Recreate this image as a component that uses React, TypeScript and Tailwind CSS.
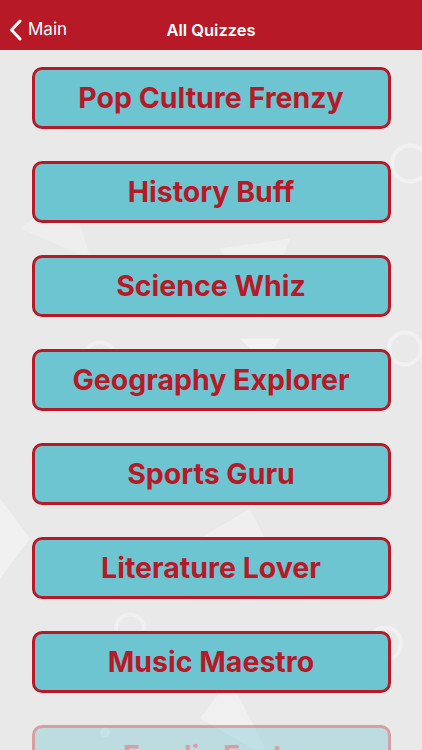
const quizzes = [
  "Pop Culture Frenzy",
  "History Buff",
  "Science Whiz",
  "Geography Explorer",
  "Sports Guru",
  "Literature Lover",
  "Music Maestro",
  "Foodie Facts",
];

function Backdrop() {
  return (
    <svg className="absolute inset-0 h-full w-full" viewBox="0 0 422 700" fill="none">
      <path d="M240 10 L300 10 L270 60 Z" fill="#f1f1f1" />
      <circle cx="410" cy="95" r="18" stroke="#f1f1f1" strokeWidth="4" />
      <path d="M20 160 L70 120 L90 190 Z" fill="#eeeeee" />
      <path d="M220 180 L290 170 L260 250 Z" fill="#efefef" />
      <circle cx="100" cy="290" r="16" stroke="#f1f1f1" strokeWidth="4" />
      <path d="M240 270 L280 270 L265 295 Z" fill="#f2f2f2" />
      <circle cx="405" cy="280" r="16" stroke="#f1f1f1" strokeWidth="4" />
      <path d="M0 430 L30 470 L0 510 Z" fill="#f1f1f1" />
      <circle cx="373" cy="385" r="5" fill="#f4f4f4" />
      <path d="M200 470 L250 440 L280 500 Z" fill="#efefef" />
      <circle cx="130" cy="560" r="14" stroke="#f0f0f0" strokeWidth="4" />
      <circle cx="385" cy="575" r="16" stroke="#f1f1f1" strokeWidth="4" />
      <path d="M200 650 L230 610 L270 690 Z" fill="#f0f0f0" />
      <circle cx="105" cy="664" r="5" fill="#f4f4f4" />
    </svg>
  );
}

export default function App() {
  return (
    <div
      className="relative flex h-[750px] w-[422px] flex-col overflow-hidden bg-[#e9e9e9]"
      style={{ fontFamily: "Inter, 'Liberation Sans', Arial, sans-serif" }}
    >
      <header className="relative z-10 flex h-[50px] shrink-0 items-center bg-[#b81926] pt-[10px] text-white">
        <div className="flex items-center gap-[6px] pl-[9px]">
          <svg width="13" height="22" viewBox="0 0 13 22" fill="none">
            <path d="M11 2 L2.5 11 L11 20" stroke="white" strokeWidth="3" strokeLinecap="round" strokeLinejoin="round" />
          </svg>
          <span className="text-[17px]">Main</span>
        </div>
        <h1 className="absolute left-1/2 -translate-x-1/2 text-[16.5px] font-semibold">All Quizzes</h1>
      </header>
      <main className="relative flex-1">
        <Backdrop />
        <div className="relative flex flex-col items-center gap-[32px] pt-[17px]">
          {quizzes.map((q, i) => (
            <button
              key={q}
              className={`flex h-[62px] w-[359px] shrink-0 items-center justify-center rounded-[10px] border-[3px] border-[#b81926] bg-[#6dc5d2] text-[28.5px] font-bold text-[#b81926] ${
                i === quizzes.length - 1 ? "opacity-35" : ""
              }`}
            >
              {q}
            </button>
          ))}
        </div>
      </main>
    </div>
  );
}
